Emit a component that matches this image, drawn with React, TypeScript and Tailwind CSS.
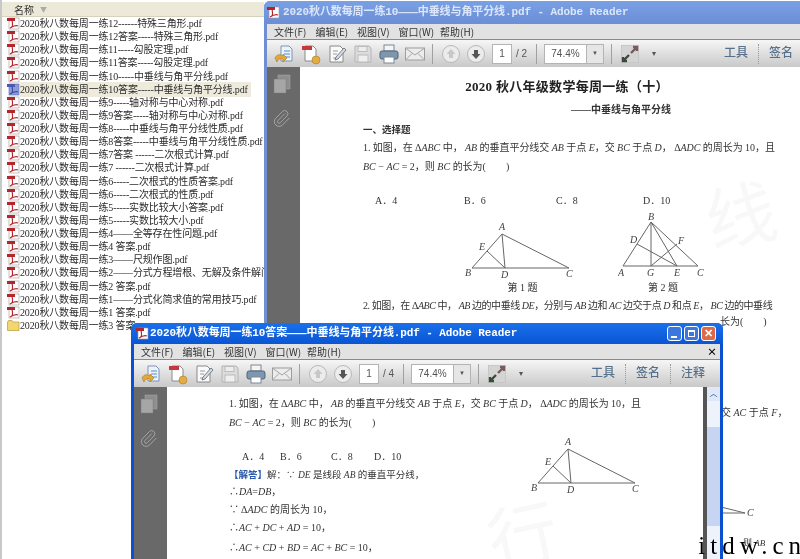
import React from 'react';
import { Paperclip } from 'lucide-react';

const FILES = [
  '2020秋八数每周一练12------特殊三角形.pdf',
  '2020秋八数每周一练12答案-----特殊三角形.pdf',
  '2020秋八数每周一练11-----勾股定理.pdf',
  '2020秋八数每周一练11答案-----勾股定理.pdf',
  '2020秋八数每周一练10-----中垂线与角平分线.pdf',
  '2020秋八数每周一练10答案-----中垂线与角平分线.pdf',
  '2020秋八数每周一练9-----轴对称与中心对称.pdf',
  '2020秋八数每周一练9答案-----轴对称与中心对称.pdf',
  '2020秋八数每周一练8-----中垂线与角平分线性质.pdf',
  '2020秋八数每周一练8答案-----中垂线与角平分线性质.pdf',
  '2020秋八数每周一练7答案 ------二次根式计算.pdf',
  '2020秋八数每周一练7 ------二次根式计算.pdf',
  '2020秋八数每周一练6-----二次根式的性质答案.pdf',
  '2020秋八数每周一练6-----二次根式的性质.pdf',
  '2020秋八数每周一练5-----实数比较大小答案.pdf',
  '2020秋八数每周一练5-----实数比较大小.pdf',
  '2020秋八数每周一练4——全等存在性问题.pdf',
  '2020秋八数每周一练4 答案.pdf',
  '2020秋八数每周一练3——尺规作图.pdf',
  '2020秋八数每周一练2——分式方程增根、无解及条件解问题',
  '2020秋八数每周一练2 答案.pdf',
  '2020秋八数每周一练1——分式化简求值的常用技巧.pdf',
  '2020秋八数每周一练1 答案.pdf',
  '2020秋八数每周一练3 答案',
];

const MENUS = ['文件(F)', '编辑(E)', '视图(V)', '窗口(W)', '帮助(H)'];

const PdfIcon = ({ blue }: { blue?: boolean }) => (
  <svg width="13" height="13" viewBox="0 0 13 13" className="shrink-0">
    <rect x="2" y="1" width="10" height="11" fill={blue ? '#8c9bd8' : '#fff'} stroke={blue ? '#5566b8' : '#999'} strokeWidth="0.6" />
    <rect x="0" y="1" width="8" height="3" fill={blue ? '#4c5ab0' : '#b3262b'} />
    <path d="M5 3 C6 8 6 10 3 11 C6 9 9 8 11 9" fill="none" stroke={blue ? '#3c4aa0' : '#b3262b'} strokeWidth="1.2" />
  </svg>
);

const FolderIcon = () => (
  <svg width="13" height="11" viewBox="0 0 13 11" className="shrink-0">
    <path d="M0.5 2 L1.5 .5 H5 L6 2 H12 V10.5 H0.5 Z" fill="#f2d66e" stroke="#b79a3c" strokeWidth="0.7" />
  </svg>
);

const TbIcon = ({ children }: { children: React.ReactNode }) => (
  <svg width="22" height="22" viewBox="0 0 22 22" className="shrink-0">{children}</svg>
);

const ToolIcons = () => (
  <>
    <TbIcon>
      <path d="M7 3 H15 L18 6 V18 H7 Z" fill="#eef3fa" stroke="#7f93b5" />
      <path d="M10 8 H16 M10 11 H16 M10 14 H16" stroke="#4f8ed0" />
      <path d="M1 15 C3 11 6 11 9 13 L9 11 L13 15 L9 19 L9 16 C6 15 4 16 3 19 Z" fill="#e2a93a" stroke="#a87618" strokeWidth="0.6" />
    </TbIcon>
    <TbIcon>
      <path d="M5 3 H13 L16 6 V18 H5 Z" fill="#fff" stroke="#8a8a8a" />
      <rect x="2" y="3" width="10" height="4" fill="#c4393c" />
      <circle cx="16" cy="17" r="4" fill="#e4ac44" stroke="#ac7c20" strokeWidth="0.6" />
    </TbIcon>
    <TbIcon>
      <path d="M4 3 H14 L17 6 V19 H4 Z" fill="#fafafa" stroke="#8a8a8a" />
      <path d="M7 8 H12 M7 11 H11 M7 15 H10" stroke="#9a9a9a" />
      <path d="M10 14 L18 5 L20 7 L12 16 L9 17 Z" fill="#d6dbe2" stroke="#5c6470" strokeWidth="0.8" />
    </TbIcon>
    <TbIcon>
      <path d="M3 3 H17 L19 5 V19 H3 Z" fill="#dcdcdc" stroke="#b4b4b4" />
      <rect x="6" y="3.5" width="9" height="5" fill="#ededed" stroke="#bcbcbc" />
      <rect x="6" y="12" width="10" height="7" fill="#efefef" stroke="#bcbcbc" />
    </TbIcon>
    <TbIcon>
      <rect x="6" y="2" width="10" height="6" fill="#f4f4f4" stroke="#7a8898" />
      <rect x="2" y="8" width="18" height="8" rx="2" fill="#7f97ae" stroke="#4e6478" />
      <rect x="6" y="14" width="10" height="6" fill="#fff" stroke="#7a8898" />
    </TbIcon>
    <TbIcon>
      <rect x="1.5" y="5" width="19" height="12" fill="#ececec" stroke="#9c9c9c" />
      <path d="M2 5.5 L11 12 L20 5.5 M2 16.5 L8 10.5 M20 16.5 L14 10.5" fill="none" stroke="#a4a4a4" />
    </TbIcon>
  </>
);

const Sep = ({ className }: { className: string }) => <div className={`w-px h-[20px] bg-[#a0a0a0] shrink-0 ${className}`} />;

const ArrowBtn = ({ up, className }: { up?: boolean; className: string }) => (
  <svg width="18" height="18" viewBox="0 0 18 18" className={`shrink-0 ${className}`}>
    <circle cx="9" cy="9" r="8.5" fill="#ececec" stroke="#b8b8b8" />
    {up
      ? <path d="M9 4 L13.5 9 H11 V13 H7 V9 H4.5 Z" fill="#c8c8c8" />
      : <path d="M9 14 L13.5 9 H11 V5 H7 V9 H4.5 Z" fill="#555" />}
  </svg>
);

const ToolLabel = ({ text, className }: { text: string; className: string }) => (
  <span className={`mb-[3px] text-[12px] font-medium text-[#56708a] shrink-0 [font-family:'Noto_Sans_CJK_SC',sans-serif] ${className}`}>{text}</span>
);

const Toolbar = ({ total, notes }: { total: number; notes?: boolean }) => (
  <div className="h-[28px] flex items-center pl-[7px] bg-gradient-to-b from-[#f6f6f6] to-[#c9c9c9] border-t border-[#8a8a8a] text-[#555] shrink-0 [font-family:'Liberation_Sans',sans-serif]">
    <div className="flex items-center gap-1 shrink-0"><ToolIcons /></div>
    <Sep className="ml-[6px]" />
    <ArrowBtn up className="ml-[9px]" />
    <ArrowBtn className="ml-[7px]" />
    <div className="ml-[7px] w-[20px] h-[20px] bg-white border border-[#b4b4b4] text-[10px] flex items-center justify-center shrink-0">1</div>
    <div className="ml-[4px] w-[16px] text-[10px] shrink-0">/ {total}</div>
    <Sep className="ml-[4px]" />
    <div className="ml-[7px] w-[60px] h-[20px] bg-white border border-[#b4b4b4] flex items-center text-[10px] shrink-0">
      <span className="flex-1 text-center">74.4%</span>
      <span className="w-[17px] h-full border-l border-[#b4b4b4] bg-[#e6e6e6] flex items-center justify-center text-[6px]">▼</span>
    </div>
    <Sep className="ml-[7px]" />
    <svg width="18" height="18" viewBox="0 0 18 18" className="ml-[9px] shrink-0">
      <rect width="18" height="18" fill="#d4d4d4" stroke="#bbb" />
      <path d="M10 8 L15 3 M12 2 H16 V6" stroke="#7a5b5b" strokeWidth="2.4" fill="none" />
      <path d="M8 10 L3 15 M2 12 V16 H6" stroke="#3c4a3c" strokeWidth="2.4" fill="none" />
    </svg>
    <div className="ml-[11px] w-[8px] text-[8px] leading-[8px] text-center shrink-0">▾</div>
    <ToolLabel text="工具" className="ml-[66px]" />
    {(notes ? ['签名', '注释'] : ['签名']).map((t) => (
      <React.Fragment key={t}>
        <div className="ml-[10px] h-[20px] border-l border-dotted border-[#999] shrink-0" />
        <ToolLabel text={t} className="ml-[10px]" />
      </React.Fragment>
    ))}
  </div>
);

const MenuBar = ({ close }: { close?: boolean }) => (
  <div className="h-[15px] bg-[#e2e2e2] flex items-center pl-[7px] text-[10px] text-[#333] shrink-0 [font-family:'Noto_Sans_CJK_SC',sans-serif]">
    {MENUS.map((m) => <span key={m} className="w-[41.5px] whitespace-nowrap">{m}</span>)}
    {close && <span className="ml-auto mr-[3px] text-[10px] font-bold text-black">×</span>}
  </div>
);

const Side = () => (
  <div className="w-[33px] bg-[#696969] flex flex-col items-center pt-[7px] pr-[4px] gap-[15px] shrink-0">
    <svg width="18" height="20" viewBox="0 0 18 20">
      <rect x="5" y="1" width="12" height="14" fill="#8e8e8e" stroke="#aaa" strokeWidth="0.5" />
      <rect x="1" y="5" width="12" height="14" fill="#a6a6a6" stroke="#7c7c7c" strokeWidth="0.5" />
    </svg>
    <Paperclip size={19} strokeWidth={1.2} color="#a8a8a8" />
  </div>
);

const I = ({ children }: { children: React.ReactNode }) => <i className="[font-family:'Liberation_Serif',serif]">{children}</i>;

const Fig1 = () => (
  <svg width="115" height="66" viewBox="0 0 115 66" className="shrink-0">
    <path d="M37 12 L7 46 H104 Z M37 12 L40 46 M22 29 L40 46" fill="none" stroke="#666" strokeWidth="1" />
    <g fontSize="10" fontStyle="italic" fontFamily="'Liberation Serif',serif" fill="#444">
      <text x="34" y="8">A</text><text x="0" y="54">B</text><text x="101" y="55">C</text>
      <text x="36" y="56">D</text><text x="14" y="28">E</text>
    </g>
  </svg>
);

const Fig2 = () => (
  <svg width="90" height="66" viewBox="0 0 90 66" className="shrink-0">
    <path d="M33 9 L5 53 H80 Z M33 9 V53 M33 9 L59 53 M19 31 L59 53 M33 53 L59 31" fill="none" stroke="#666" strokeWidth="1" />
    <g fontSize="10" fontStyle="italic" fontFamily="'Liberation Serif',serif" fill="#444">
      <text x="30" y="7">B</text><text x="0" y="63">A</text><text x="79" y="63">C</text>
      <text x="29" y="63">G</text><text x="56" y="63">E</text><text x="12" y="30">D</text><text x="60" y="31">F</text>
    </g>
  </svg>
);

export default function App() {
  return (
    <div className="relative w-[800px] h-[559px] overflow-hidden bg-white blur-[0.35px] [font-family:'Liberation_Serif','Noto_Sans_CJK_SC',serif]">
      {/* explorer file list */}
      <div className="w-[264px] h-full flex flex-col border-l-2 border-[#c8c8c8] overflow-hidden">
        <div className="mt-[2px] h-[15px] bg-[#ece9d8] border-b border-[#d6d2c0] pl-[12px] flex items-center gap-[6px] text-[10px] text-[#333] shrink-0 [font-family:'Noto_Sans_CJK_SC',sans-serif]">
          名称 <span className="text-[7px] text-[#aaa]">▼</span>
        </div>
        <div className="flex flex-col pl-[5px]">
          {FILES.map((f, i) => (
            <div key={f} className="h-[13.13px] flex items-center whitespace-nowrap text-[10px] tracking-[-0.15px] text-[#2b2b2b]">
              {i === 23 ? <FolderIcon /> : <PdfIcon blue={i === 5} />}
              <span className={`${i === 5 ? 'bg-[#eeeadc]' : ''} pr-[3px]`}>{f}</span>
            </div>
          ))}
        </div>
      </div>

      {/* back reader window */}
      <div className="absolute left-[264px] top-[1px] w-[540px] h-[558px] flex flex-col bg-[#6f8fd4] pl-[3px] rounded-tl-md">
        <div className="h-[23px] -ml-[3px] flex items-center pl-[3px] bg-gradient-to-b from-[#7aa0e4] to-[#6b8ed6] rounded-tl-md text-[#dbe6fa] shrink-0">
          <PdfIcon />
          <span className="ml-[3px] text-[11px] font-bold tracking-[-0.1px] whitespace-nowrap [font-family:'Liberation_Mono','Noto_Sans_CJK_SC',monospace]">2020秋八数每周一练10———中垂线与角平分线.pdf - Adobe Reader</span>
        </div>
        <MenuBar />
        <Toolbar total={2} />
        <div className="flex-1 flex min-h-0">
          <Side />
          <div className="relative flex-1 bg-white pl-[63px] text-[10px] text-[#333]">
            <div className="absolute left-[405px] top-[110px] text-[70px] leading-none text-[#f8f8f8] -rotate-12 [font-family:'Noto_Sans_CJK_SC',sans-serif]">线</div>
            <div className="relative">
              <div className="pt-[10px] w-[408px] text-center text-[13px] font-bold text-[#222] tracking-[0.3px]">2020 秋八年级数学每周一练（十）</div>
              <div className="mt-[5px] pl-[208px] font-bold whitespace-nowrap">——中垂线与角平分线</div>
              <div className="mt-[6px] text-[9.5px] font-bold">一、选择题</div>
              <div className="mt-[3px] whitespace-nowrap tracking-[-0.05px]">1. 如图，在 Δ<I>ABC</I> 中， <I>AB</I> 的垂直平分线交 <I>AB</I> 于点 <I>E</I>，交 <I>BC</I> 于点 <I>D</I>， Δ<I>ADC</I> 的周长为 10，且</div>
              <div className="mt-[4px] whitespace-nowrap"><I>BC</I> − <I>AC</I> = 2，则 <I>BC</I> 的长为(　　)</div>
              <div className="mt-[19px] flex pl-[12px] h-[14px]">
                <span className="w-[89px]">A．4</span><span className="w-[92px]">B．6</span><span className="w-[87px]">C．8</span><span>D．10</span>
              </div>
              <div className="flex mt-[6px] pl-[102px]">
                <div className="flex flex-col items-center w-[115px]">
                  <div className="mt-[9px] -mb-[9px]"><Fig1 /></div>
                  <span className="mt-[1px]">第 1 题</span>
                </div>
                <div className="flex flex-col items-center ml-[38px] w-[90px]"><Fig2 /><span className="mt-[1px]">第 2 题</span></div>
              </div>
              <div className="mt-[3px] whitespace-nowrap tracking-[-0.45px]">2. 如图，在 Δ<I>ABC</I> 中， <I>AB</I> 边的中垂线 <I>DE</I>，分别与 <I>AB</I> 边和 <I>AC</I> 边交于点 <I>D</I> 和点 <I>E</I>， <I>BC</I> 边的中垂线</div>
              <div className="mt-[1px] pl-[357px] whitespace-nowrap">长为(　　)</div>
              <div className="mt-[76px] pl-[358px] whitespace-nowrap">交 <I>AC</I> 于点 <I>F</I>，</div>
              <div className="mt-[84px] pl-[358px]">
                <svg width="36" height="14" viewBox="0 0 36 14"><path d="M0 3 L24 9 H0" fill="none" stroke="#666" /><text x="26" y="12" fontSize="10" fontStyle="italic" fill="#444">C</text></svg>
              </div>
              <div className="mt-[19px] pl-[380px] text-[9px] whitespace-nowrap">则 <I>AB</I></div>
            </div>
          </div>
        </div>
      </div>

      {/* front reader window */}
      <div className="absolute left-[131px] top-[323px] w-[592px] h-[240px] flex flex-col bg-[#0a50d0] px-[3px] rounded-t-md">
        <div className="h-[21px] -mx-[3px] px-[5px] flex items-center bg-gradient-to-b from-[#1a70ea] to-[#0a55d4] rounded-t-md text-white shrink-0">
          <PdfIcon />
          <span className="ml-[1px] text-[11px] font-bold tracking-[-0.1px] whitespace-nowrap [font-family:'Liberation_Mono','Noto_Sans_CJK_SC',monospace]">2020秋八数每周一练10答案———中垂线与角平分线.pdf - Adobe Reader</span>
          <div className="ml-auto mr-[2px] flex gap-[2px] shrink-0">
            <span className="w-[15px] h-[15px] rounded-[3px] border border-white bg-[#3a78e0] flex items-end pl-[3px] pb-[2px]"><span className="w-[6px] h-[2px] bg-white" /></span>
            <span className="w-[15px] h-[15px] rounded-[3px] border border-white bg-[#3a78e0] p-[3px]"><span className="block w-full h-full border border-white border-t-2" /></span>
            <span className="w-[15px] h-[15px] rounded-[3px] border border-white bg-[#dc6a48] text-white text-[11px] leading-[12px] text-center font-bold [font-family:'Liberation_Sans',sans-serif]">✕</span>
          </div>
        </div>
        <MenuBar close />
        <Toolbar total={4} notes />
        <div className="flex-1 flex min-h-0">
          <Side />
          <div className="relative flex-1 bg-white pl-[62px] text-[10px] text-[#333] overflow-hidden">
            <div className="absolute left-[320px] top-[110px] text-[70px] leading-none text-[#f8f8f8] -rotate-12 [font-family:'Noto_Sans_CJK_SC',sans-serif]">行</div>
            <div className="relative">
              <div className="pt-[9px] whitespace-nowrap tracking-[-0.05px]">1. 如图，在 Δ<I>ABC</I> 中， <I>AB</I> 的垂直平分线交 <I>AB</I> 于点 <I>E</I>，交 <I>BC</I> 于点 <I>D</I>， Δ<I>ADC</I> 的周长为 10，且</div>
              <div className="mt-[4px] whitespace-nowrap"><I>BC</I> − <I>AC</I> = 2，则 <I>BC</I> 的长为(　　)</div>
              <div className="flex">
                <div className="w-[302px] shrink-0">
                  <div className="mt-[19px] flex pl-[13px] h-[14px]">
                    <span className="w-[38px]">A．4</span><span className="w-[51px]">B．6</span><span className="w-[43px]">C．8</span><span>D．10</span>
                  </div>
                  <div className="mt-[5px] text-[9.5px]"><span className="text-[#2a5aa8] font-bold">【解答】</span>解：∵ <I>DE</I> 是线段 <I>AB</I> 的垂直平分线，</div>
                  <div className="mt-[2px]">∴<I>DA</I>=<I>DB</I>，</div>
                  <div className="mt-[3px]">∵ Δ<I>ADC</I> 的周长为 10，</div>
                  <div className="mt-[3px]">∴<I>AC</I> + <I>DC</I> + <I>AD</I> = 10，</div>
                  <div className="mt-[5px]">∴<I>AC</I> + <I>CD</I> + <I>BD</I> = <I>AC</I> + <I>BC</I> = 10，</div>
                </div>
                <div className="mt-[7px]"><Fig1 /></div>
              </div>
            </div>
          </div>
          <div className="w-[4px] bg-[#555] shrink-0" />
          <div className="w-[13px] bg-[#eef2fa] shrink-0 flex flex-col">
            <div className="h-[14px] bg-[#dfe8f8] text-[8px] text-center text-[#3a5a90] leading-[14px]">︿</div>
            <div className="mt-[26px] h-[99px] bg-[#c6d6f2]" />
          </div>
        </div>
      </div>

      {/* watermark */}
      <div className="absolute right-[-6px] bottom-[-5px] text-[25px] tracking-[5px] text-black [font-family:'Liberation_Serif',serif]">itdw.cn</div>
    </div>
  );
}
